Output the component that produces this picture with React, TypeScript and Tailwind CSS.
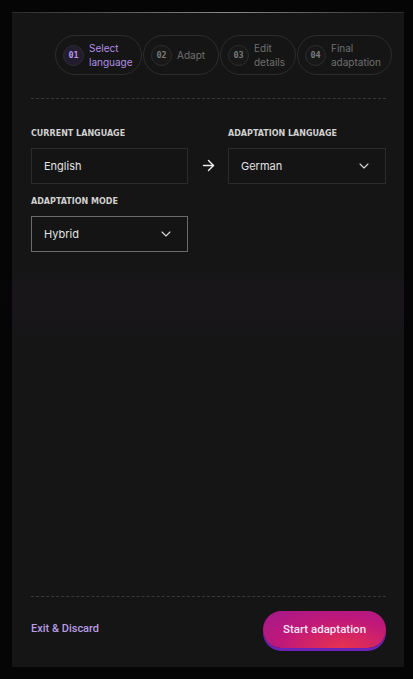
import { ArrowRight, ChevronDown } from 'lucide-react'

type Step = {
  num: string
  lines: string[]
  width: string
}

const steps: Step[] = [
  { num: '01', lines: ['Select', 'language'], width: 'w-[87px]' },
  { num: '02', lines: ['Adapt'], width: 'w-[76px]' },
  { num: '03', lines: ['Edit', 'details'], width: 'w-[76px]' },
  { num: '04', lines: ['Final', 'adaptation'], width: 'w-[95px]' }
]

const labelFont = { fontFamily: '"DejaVu Sans", sans-serif' }
const bodyFont = { fontFamily: 'Inter, "Noto Sans", sans-serif' }
const monoFont = { fontFamily: '"DejaVu Sans Mono", monospace' }
const actionFont = { fontFamily: 'Roboto, "Liberation Sans", sans-serif' }

function StepPill({ step, active }: { step: Step; active: boolean }) {
  return (
    <div
      className={`${step.width} h-10 shrink-0 rounded-full border border-[#2c2c2c] flex items-center pl-[7px] gap-[5px]`}
    >
      <div
        className={`w-[21px] h-[21px] shrink-0 rounded-full border border-[#2e2e2e] flex items-center justify-center text-[8.5px] font-bold ${
          active ? 'bg-[#231c2e] text-[#b596ea]' : 'bg-[#181818] text-[#7a7a7a]'
        }`}
        style={monoFont}
      >
        {step.num}
      </div>
      <div
        className={`text-[10px] leading-[14px] ${active ? 'text-[#b08ee6]' : 'text-[#6f6f6f]'}`}
        style={bodyFont}
      >
        {step.lines.map((l) => (
          <div key={l}>{l}</div>
        ))}
      </div>
    </div>
  )
}

function FieldLabel({ children }: { children: string }) {
  return (
    <div
      className="text-[8px] font-bold text-[#d0d0d0] uppercase h-[10px] leading-[10px]"
      style={labelFont}
    >
      {children}
    </div>
  )
}

export default function App() {
  return (
    <div className="w-[413px] h-[679px] bg-[#050505] overflow-hidden relative">
      {/* faint purple haze behind the panel */}
      <div className="absolute inset-x-0 top-[220px] h-[140px] bg-[radial-gradient(ellipse_at_center,rgba(70,30,80,0.35),transparent_70%)]" />

      <div className="relative pt-3 px-3">
        <div className="w-[392px] h-[655px] bg-[#151515] flex flex-col relative">
          {/* lit top edge */}
          <div className="absolute top-0 inset-x-0 h-px bg-[linear-gradient(90deg,#2a2a2a,#8a8a8a_55%,#2a2a2a)]" />
          {/* soft violet tint across the middle */}
          <div className="absolute inset-x-0 top-[240px] h-[100px] bg-[linear-gradient(180deg,transparent,rgba(35,25,40,0.25),transparent)] pointer-events-none" />

          <div className="pt-[23px] pl-[43px] flex gap-px">
            {steps.map((s, i) => (
              <StepPill key={s.num} step={s} active={i === 0} />
            ))}
          </div>

          <div className="mx-[18px] ml-[19px] mt-[23px] border-t border-dashed border-[#383838]" />

          <div className="px-[18px] pl-[19px] pt-[30px] relative">
            <div className="flex">
              <div className="w-[157px]">
                <FieldLabel>Current language</FieldLabel>
                <div
                  className="mt-[9px] h-9 border border-[#2b2b2b] bg-[#141414] flex items-center px-3 text-[11px] text-[#e2e2e2]"
                  style={bodyFont}
                >
                  English
                </div>
              </div>
              <div className="w-10 flex items-end justify-center pb-[10px]">
                <ArrowRight size={17} strokeWidth={2} color="#ececec" />
              </div>
              <div className="w-[158px]">
                <FieldLabel>Adaptation language</FieldLabel>
                <div
                  className="mt-[9px] h-9 border border-[#2b2b2b] bg-[#141414] flex items-center justify-between pl-3 pr-[13px] text-[11px] text-[#e2e2e2]"
                  style={bodyFont}
                >
                  German
                  <ChevronDown size={16} strokeWidth={1.6} color="#d8d8d8" />
                </div>
              </div>
            </div>

            <div className="mt-[13px] w-[157px]">
              <FieldLabel>Adaptation mode</FieldLabel>
              <div
                className="mt-[9px] h-9 border border-[#6a6a6a] bg-[#141414] flex items-center justify-between pl-3 pr-[13px] text-[11px] text-[#e2e2e2]"
                style={bodyFont}
              >
                Hybrid
                <ChevronDown size={16} strokeWidth={1.6} color="#d8d8d8" />
              </div>
            </div>
          </div>

          <div className="flex-1" />

          <div className="mx-[18px] ml-[19px] border-t border-dashed border-[#383838]" />

          <div className="px-[18px] pl-[19px] pt-[14px] pb-[19px] flex items-center justify-between">
            <button className="text-[11px] font-medium text-[#b79be4]" style={actionFont}>
              Exit &amp; Discard
            </button>
            <button
              className="w-[123px] h-[37px] rounded-full text-[11.5px] font-medium text-[#f3e6f6] bg-[radial-gradient(ellipse_at_65%_100%,#e8324f,#c0187a_55%,#a21a8a)] shadow-[0_3px_0_#6d22b8]"
              style={actionFont}
            >
              Start adaptation
            </button>
          </div>
        </div>
      </div>
    </div>
  )
}
